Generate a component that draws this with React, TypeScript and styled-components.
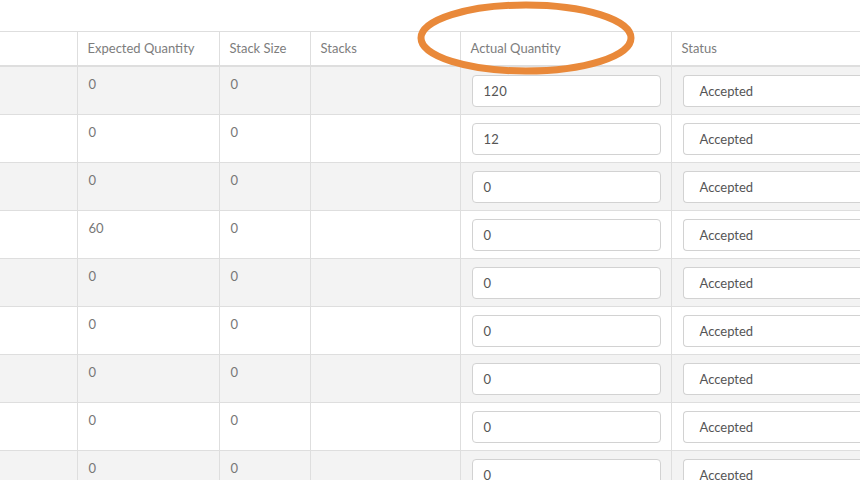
import React from "react";
import styled, { createGlobalStyle } from "styled-components";

const Global = createGlobalStyle`
  html, body { margin: 0; padding: 0; background: #fff; overflow: hidden; }
  body { font-family: Lato, "Open Sans", "Liberation Sans", sans-serif; }
`;

const Page = styled.div`
  position: relative;
  width: 860px;
  height: 480px;
  overflow: hidden;
  padding-top: 31px;
  box-sizing: border-box;
`;

const Table = styled.table`
  border-collapse: collapse;
  table-layout: fixed;
  width: 1000px;
  font-size: 13px;
  line-height: 18px;
  color: #777;
`;

const Th = styled.th`
  text-align: left;
  font-weight: 400;
  color: #7d7d7d;
  padding: 7px 10px 8px 10px;
  height: 18px;
  border-top: 1px solid #dedede;
  border-bottom: 2px solid #dedede;
  border-left: 1px solid #dedede;
  &:first-child { border-left: none; }
`;

const Tr = styled.tr<{ $odd: boolean }>`
  background: ${(p) => (p.$odd ? "#f3f3f3" : "#fff")};
`;

const Td = styled.td`
  vertical-align: top;
  padding: 8px 10px 7px 11px;
  border-top: 1px solid #dedede;
  border-left: 1px solid #dedede;
  &:first-child { border-left: none; }
`;

const InputBox = styled.div`
  box-sizing: border-box;
  height: 32px;
  border: 1px solid #d2d2d2;
  border-radius: 4px;
  background: #fff;
  color: #555;
  font-size: 13px;
  line-height: 30px;
  padding-left: 11px;
  letter-spacing: 0.3px;
`;

const SelectBox = styled(InputBox)`
  padding-left: 16px;
  letter-spacing: 0;
  border-right: none;
  border-radius: 4px 0 0 4px;
`;

const Mark = styled.svg`
  position: absolute;
  left: 412px;
  top: 0;
  pointer-events: none;
`;

const rows = [
  { exp: "0", act: "120" },
  { exp: "0", act: "12" },
  { exp: "0", act: "0" },
  { exp: "60", act: "0" },
  { exp: "0", act: "0" },
  { exp: "0", act: "0" },
  { exp: "0", act: "0" },
  { exp: "0", act: "0" },
  { exp: "0", act: "0" },
];

export default function App() {
  return (
    <Page>
      <Global />
      <Table>
        <colgroup>
          <col style={{ width: 77 }} />
          <col style={{ width: 142 }} />
          <col style={{ width: 91 }} />
          <col style={{ width: 150 }} />
          <col style={{ width: 211 }} />
          <col style={{ width: 329 }} />
        </colgroup>
        <thead>
          <tr>
            <Th></Th>
            <Th>Expected Quantity</Th>
            <Th>Stack Size</Th>
            <Th>Stacks</Th>
            <Th>Actual Quantity</Th>
            <Th>Status</Th>
          </tr>
        </thead>
        <tbody>
          {rows.map((r, i) => (
            <Tr key={i} $odd={i % 2 === 0}>
              <Td></Td>
              <Td>{r.exp}</Td>
              <Td>0</Td>
              <Td></Td>
              <Td>
                <InputBox>{r.act}</InputBox>
              </Td>
              <Td>
                <SelectBox>Accepted</SelectBox>
              </Td>
            </Tr>
          ))}
        </tbody>
      </Table>
      <Mark width="230" height="80" viewBox="0 0 230 80">
        <ellipse cx="114" cy="38" rx="105" ry="33" fill="none" stroke="#e9893a" strokeWidth="7" />
      </Mark>
    </Page>
  );
}
